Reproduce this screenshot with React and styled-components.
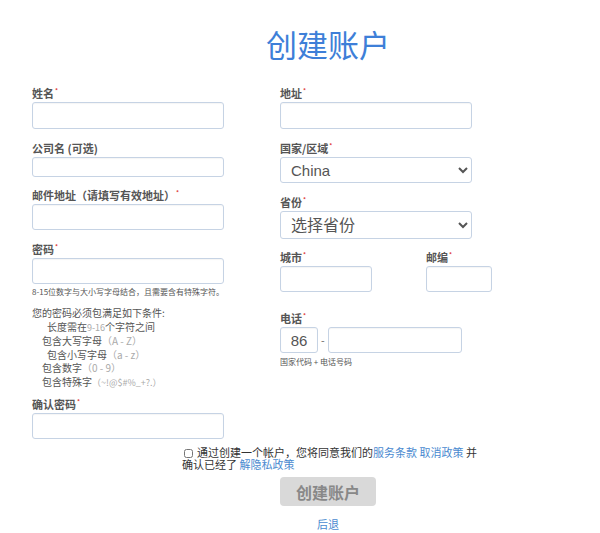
import React, { useState } from 'react';
import styled, { createGlobalStyle } from 'styled-components';

const GlobalStyle = createGlobalStyle`
  body {
    margin: 0;
    background: #ffffff;
    font-family: "Liberation Sans", "Noto Sans CJK SC", sans-serif;
    color: #444;
    overflow-x: hidden;
  }
`;

const Page = styled.div`
  width: 600px;
`;

const Centered = styled.div`
  padding-left: 56px;
  text-align: center;
`;

const Title = styled.h1`
  margin: 24px 0 0;
  font-size: 31px;
  line-height: 40px;
  font-weight: normal;
  color: #3e7fd8;
  font-family: "Noto Sans CJK SC", sans-serif;
`;

const FormGrid = styled.div`
  display: grid;
  grid-template-columns: 248px 248px;
  padding-left: 32px;
  margin-top: 22px;
`;

const Column = styled.div`
  display: flex;
  flex-direction: column;
`;

const Field = styled.div`
  display: flex;
  flex-direction: column;
  margin-bottom: ${({ $gap }) => $gap ?? 12}px;
`;

const Label = styled.label`
  font-family: "Noto Sans CJK SC", sans-serif;
  font-size: 11px;
  line-height: 14px;
  height: 14px;
  font-weight: bold;
  color: #555;
  margin-bottom: 2px;
`;

const Star = styled.span`
  color: #e04040;
  font-size: 6px;
  line-height: 0;
  vertical-align: 5px;
  margin-left: 1px;
`;

const TextInput = styled.input`
  box-sizing: border-box;
  width: ${({ $w }) => $w ?? 192}px;
  height: ${({ $h }) => $h ?? 26}px;
  border: 1px solid #c6d3e4;
  border-radius: 3px;
  padding: 0 ${({ $pad }) => $pad ?? 8}px;
  font-size: 15px;
  color: #555;
  font-family: "Liberation Sans", sans-serif;
  outline: none;
  box-shadow: inset 0 1px 1px rgba(0, 0, 0, 0.04);
  text-align: ${({ $center }) => ($center ? 'center' : 'left')};
`;

const Select = styled.select`
  box-sizing: border-box;
  width: 192px;
  height: ${({ $h }) => $h ?? 26}px;
  border: 1px solid #c6d3e4;
  border-radius: 3px;
  background: #fff;
  padding: 0 6px;
  font-size: ${({ $fs }) => $fs ?? 15}px;
  color: #555;
  font-family: "Liberation Sans", "Noto Sans CJK SC", sans-serif;
  outline: none;
`;

const Hint = styled.div`
  font-family: "Noto Sans CJK SC", sans-serif;
  font-size: 8px;
  line-height: 11px;
  color: #555;
  margin-top: ${({ $top }) => $top ?? 2}px;
`;

const Rules = styled.div`
  font-family: "Noto Sans CJK SC", sans-serif;
  font-size: 10px;
  line-height: 13.5px;
  color: #555;
  margin: 9px 0 8px;
`;

const RuleItem = styled.div`
  padding-left: ${({ $indent }) => $indent}px;
`;

const Faint = styled.span`
  color: #aaa;
  font-size: ${({ $small }) => ($small ? 9 : 10)}px;
`;

const Row = styled.div`
  display: flex;
  align-items: ${({ $align }) => $align ?? 'flex-start'};
  gap: ${({ $gap }) => $gap ?? 0}px;
`;

const Dash = styled.span`
  font-size: 11px;
  line-height: 12px;
  color: #777;
`;

const Agreement = styled.div`
  width: 292px;
  margin: 7px auto 0;
  text-align: left;
  font-family: "Noto Sans CJK SC", sans-serif;
  font-size: 11px;
  color: #333;
  white-space: nowrap;
`;

const AgreeLine = styled.div`
  height: 12px;
  line-height: 12px;
`;

const Check = styled.input`
  width: 9px;
  height: 9px;
  margin: 0 4px 0 2px;
  vertical-align: -1px;
`;

const Link = styled.a`
  color: #4a8ad0;
  text-decoration: none;
  cursor: pointer;
`;

const SubmitButton = styled.button`
  display: block;
  margin: 7px auto 0;
  width: 96px;
  height: 29px;
  border: none;
  border-radius: 4px;
  background: #d9d9d9;
  color: #888;
  font-family: "Noto Sans CJK SC", sans-serif;
  font-size: 16px;
  font-weight: bold;
  cursor: not-allowed;
`;

const BackLink = styled(Link)`
  display: block;
  margin-top: 11px;
  font-family: "Noto Sans CJK SC", sans-serif;
  font-size: 11px;
  line-height: 14px;
`;

const Req = ({ children }) => (
  <Label>
    {children}
    <Star>*</Star>
  </Label>
);

export default function App() {
  const [country, setCountry] = useState('China');
  const [agreed, setAgreed] = useState(false);

  return (
    <Page>
      <GlobalStyle />
      <Centered>
        <Title>创建账户</Title>
      </Centered>

      <FormGrid>
        <Column>
          <Field>
            <Req>姓名</Req>
            <TextInput $h={27} />
          </Field>
          <Field $gap={11}>
            <Label>公司名 (可选)</Label>
            <TextInput $h={20} />
          </Field>
          <Field>
            <Req>邮件地址（请填写有效地址）</Req>
            <TextInput />
          </Field>
          <Field $gap={0}>
            <Req>密码</Req>
            <TextInput type="password" />
            <Hint>8-15位数字与大小写字母结合，且需要含有特殊字符。</Hint>
          </Field>
          <Rules>
            <div>您的密码必须包满足如下条件:</div>
            <RuleItem $indent={15}>
              长度需在<Faint $small>9-16</Faint>个字符之间
            </RuleItem>
            <RuleItem $indent={10}>
              包含大写字母<Faint>（A - Z）</Faint>
            </RuleItem>
            <RuleItem $indent={15}>
              包含小写字母<Faint>（a - z）</Faint>
            </RuleItem>
            <RuleItem $indent={10}>
              包含数字<Faint>（0 - 9）</Faint>
            </RuleItem>
            <RuleItem $indent={10}>
              包含特殊字<Faint $small>（~!@$#%_+?.）</Faint>
            </RuleItem>
          </Rules>
          <Field $gap={0}>
            <Req>确认密码</Req>
            <TextInput type="password" />
          </Field>
        </Column>

        <Column>
          <Field>
            <Req>地址</Req>
            <TextInput $h={27} />
          </Field>
          <Field>
            <Req>国家/区域</Req>
            <Select value={country} onChange={(e) => setCountry(e.target.value)}>
              <option>China</option>
            </Select>
          </Field>
          <Field $gap={11}>
            <Req>省份</Req>
            <Select $h={28} $fs={16} defaultValue="">
              <option value="">选择省份</option>
            </Select>
          </Field>
          <Row $gap={54}>
            <Field $gap={19}>
              <Req>城市</Req>
              <TextInput $w={92} />
            </Field>
            <Field $gap={19}>
              <Req>邮编</Req>
              <TextInput $w={66} />
            </Field>
          </Row>
          <Field $gap={0}>
            <Req>电话</Req>
            <Row $align="center" $gap={3}>
              <TextInput $w={38} $pad={0} $center defaultValue="86" />
              <Dash>-</Dash>
              <TextInput $w={134} />
            </Row>
            <Hint $top={3}>国家代码 + 电话号码</Hint>
          </Field>
        </Column>
      </FormGrid>

      <Centered>
        <Agreement>
          <AgreeLine>
            <Check
              type="checkbox"
              checked={agreed}
              onChange={() => setAgreed(!agreed)}
            />
            通过创建一个帐户，您将同意我们的<Link>服务条款</Link> <Link>取消政策</Link> 并
          </AgreeLine>
          <AgreeLine>
            确认已经了 <Link>解隐私政策</Link>
          </AgreeLine>
        </Agreement>
        <SubmitButton disabled={!agreed}>创建账户</SubmitButton>
        <BackLink>后退</BackLink>
      </Centered>
    </Page>
  );
}
